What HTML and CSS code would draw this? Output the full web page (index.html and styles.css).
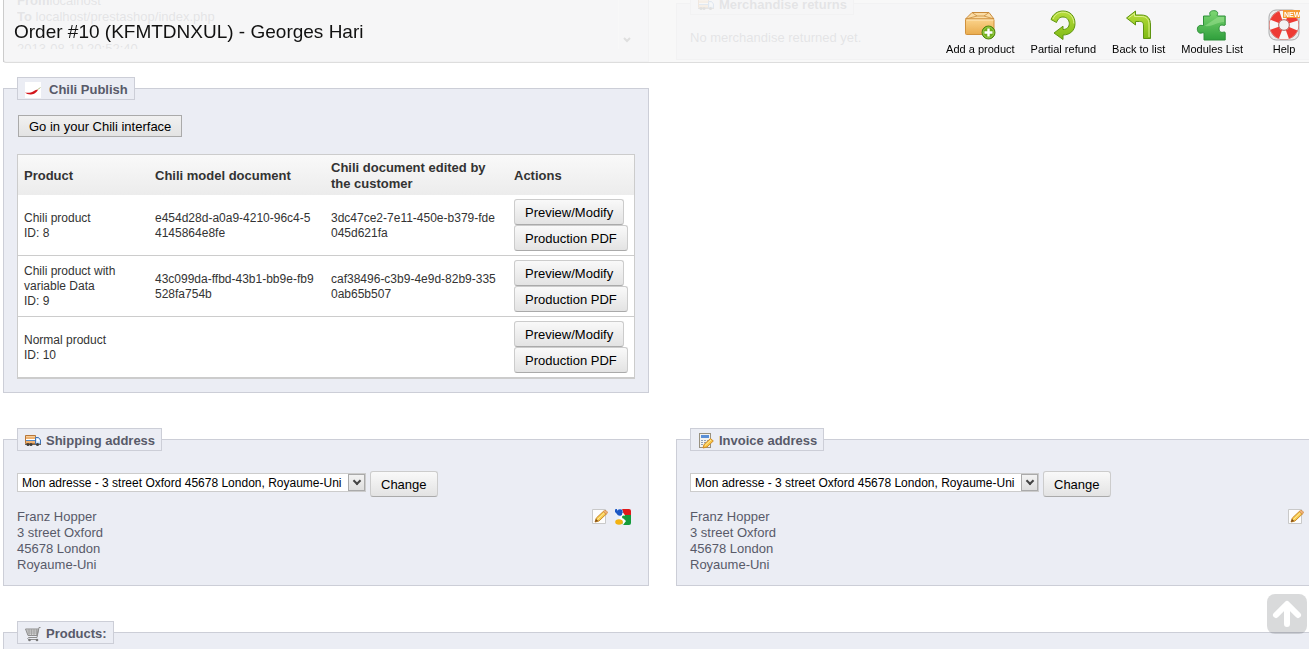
FILE: index.html
```html
<!DOCTYPE html>
<html lang="en">
<head>
    <meta charset="utf-8">
    <title>Order #10 (KFMTDNXUL) - Georges Hari</title>
    <link rel="stylesheet" href="styles.css">
</head>
<body>
    <!-- shared icons -->
    <svg class="defs" width="0" height="0" aria-hidden="true">
        <defs>
            <linearGradient id="green" x1="0" y1="0" x2="0" y2="1">
                <stop offset="0" stop-color="#b9de3c"/>
                <stop offset="1" stop-color="#7fba14"/>
            </linearGradient>
            <linearGradient id="puzzle" x1="0" y1="0" x2="0" y2="1">
                <stop offset="0" stop-color="#7fd873"/>
                <stop offset="1" stop-color="#2f9f3c"/>
            </linearGradient>
            <linearGradient id="box" x1="0" y1="0" x2="0" y2="1">
                <stop offset="0" stop-color="#fbd48c"/>
                <stop offset="1" stop-color="#e9ab4d"/>
            </linearGradient>
        </defs>
        <symbol id="truck" viewBox="0 0 16 16">
            <path d="M0.5 2.500h10v8h-10z" fill="#eeb272" stroke="#b5763a"/>
            <path d="M1 3.500h9" stroke="#f8cf9b"/>
            <path d="M1 6.500h9" stroke="#fff"/>
            <path d="M1 7.500h9" stroke="#4f87c7"/>
            <path d="M10.500 4.500h3l2 2.500v4h-5z" fill="#cfe3fa" stroke="#3f74b8"/>
            <path d="M12 6h1.500l1 1.500v1H12z" fill="#fff"/>
            <path d="M0 11h16v1H0z" fill="#6b6660"/>
            <circle cx="3" cy="11.500" r="1.500" fill="#3d3d3d"/>
            <circle cx="6" cy="11.500" r="1.500" fill="#3d3d3d"/>
            <circle cx="12.500" cy="11.500" r="1.500" fill="#3d3d3d"/>
        </symbol>
        <symbol id="pencil" viewBox="0 0 16 16">
            <path d="M0.500 .5h13v14h-13z" fill="#fdfdfd" stroke="#c9c9c9"/>
            <path d="M3 13l1.300-4L11.500 2.300l2.800 2.700L7 12z" fill="#f8cc4f" stroke="#c98a2a"/>
            <path d="M5.500 10.500l7-6.700" stroke="#fdeaa0"/>
            <path d="M11.300 2.600l1.200-1.100h1.500l1.400 1.500-.1 1.200-1.200 1z" fill="#f0b07a" stroke="#cf8a3c" stroke-width=".7"/>
            <path d="M3 13l1-3 2.200 2z" fill="#7a4a1c"/>
        </symbol>
    </svg>

    <header class="toolbar">
        <h1>Order #10 (KFMTDNXUL) - Georges Hari</h1>
        <nav class="actions">
            <a href="#">
                <svg viewBox="0 0 32 32">
                    <path d="M8 3.500h17l5 6.500H1.500z" fill="#fbdca4" stroke="#c88a3a"/>
                    <path d="M8 3.500l5 3.500h7l5-3.500M2 10l11-3M30 10L20 7" fill="none" stroke="#c88a3a" stroke-width=".8"/>
                    <rect x="1.500" y="10" width="28.500" height="15.500" rx="1" fill="url(#box)" stroke="#d0913c"/>
                    <path d="M2.500 11h27" stroke="#fde7bd"/>
                    <circle cx="24.500" cy="23.500" r="6.500" fill="#6fae1c" stroke="#4c8410"/>
                    <circle cx="24.500" cy="23.500" r="5.300" fill="none" stroke="#a5d351" stroke-width=".8"/>
                    <path d="M24.500 19.500v8M20.500 23.500h8" stroke="#fff" stroke-width="2.400"/>
                </svg>
                Add a product
            </a>
            <a href="#">
                <svg viewBox="0 0 32 32">
                    <path d="M4 10.500C6 5 10.500 2 16 2c7.300 0 12 5.200 12 12.500C28 21.500 23 26 16 26v4.500L7 24l9-6.800v3.300c3.700 0 6.300-2.300 6.300-6S19.500 8 16 8c-3 0-5 1.500-6.500 5.500z" fill="url(#green)" stroke="#5e9410" stroke-linejoin="round"/>
                    <path d="M6 10C8 5.500 11.500 3.200 16 3.200c6.500 0 10.800 4.800 10.800 11.300" fill="none" stroke="#dcf08c"/>
                </svg>
                Partial refund
            </a>
            <a href="#">
                <svg viewBox="0 0 32 32">
                    <path d="M3.500 9l9-7v4h5.500c6.500 0 9.500 3 9.500 10v13.500h-7V17c0-3.500-1-4.500-4-4.500h-4V16z" fill="url(#green)" stroke="#5e9410" stroke-linejoin="round"/>
                    <path d="M5.500 9l6-4.500v3H18c5.500 0 8 2.500 8 8.500v12" fill="none" stroke="#dcf08c"/>
                </svg>
                Back to list
            </a>
            <a href="#">
                <svg viewBox="0 0 32 32">
                    <path d="M7.500 6.500h6.300c1-.6-.8-2 .2-3.700C15 .6 20.500.6 21.500 2.800c.8 1.700-1 3 0 3.700h7.700v9c-1 1.300-2.600-.6-4.400.2-2.300 1-2.300 6 0 7 1.800.8 3.400-1 4.400.3v7.500H8v-7c-1-1-2.500.7-4.400 0-3-1-3-6.500 0-7.500 1.900-.7 3.400.6 3.900 0z" transform="translate(0 .5)" fill="url(#puzzle)" stroke="#2d8f38"/>
                    <path d="M8.500 8h6M22 8h6v5C21 13 17 18 8.500 17z" fill="#a9e69c" opacity=".45"/>
                </svg>
                Modules List
            </a>
            <a href="#">
                <svg viewBox="0 0 32 32">
                    <rect x="1" y="1" width="30" height="30" rx="7" fill="#ececec" stroke="#a9aaab"/>
                    <path d="M4 10Q5 5 10 4M22 28q5-1 6-6M4 22q1 5 6 6" fill="none" stroke="#bcbcbc" stroke-width="2"/>
                    <circle cx="16" cy="16" r="10" fill="none" stroke="#c94a42" stroke-width="10"/>
                    <circle cx="16" cy="16" r="10" fill="none" stroke="#f7f7f7" stroke-width="9"/>
                    <circle cx="16" cy="16" r="10" fill="none" stroke="#ee3b34" stroke-width="9" stroke-dasharray="8.700 7.008" stroke-dashoffset="4.350" transform="rotate(45 16 16)"/>
                    <circle cx="16" cy="16" r="5.300" fill="#f3f3f3" stroke="#b96b66"/>
                    <rect x="15" y="1" width="17" height="8" fill="#f59a33"/>
                    <text x="16" y="8" class="new-tag">NEW</text>
                </svg>
                Help
            </a>
        </nav>
    </header>

    <main class="page">
        <div class="columns top-row">
            <div class="panel messages">
                <div class="message-list">
                    <div class="message-text">
                        <b>From</b>localhost<br>
                        <b>To</b> localhost/prestashop/index.php<br>
                        <br>
                        2013-08-19 20:52:40
                    </div>
                    <div class="scroll-track">
                        <svg viewBox="0 0 8 6"><path d="M1 1l3 3 3-3" fill="none" stroke="#333" stroke-width="2"/></svg>
                    </div>
                </div>
            </div>
            <fieldset class="panel">
                <legend><svg><use href="#truck"/></svg>Merchandise returns</legend>
                No merchandise returned yet.
            </fieldset>
        </div>

        <div class="columns">
            <fieldset class="panel">
                <legend class="wide">
                    <svg viewBox="0 0 16 16">
                        <rect width="16" height="16" fill="#fff"/>
                        <path d="M0 10.500c3 .7 6 .2 8.500-1.300 1.500-.9 3-1.500 4.500-1.700-.7 2.500-3.500 4.700-7 4.900-2.500.1-4.700-.6-6-1.900z" fill="#d3151c"/>
                        <path d="M12.500 7.700L15.500 5.500" stroke="#b5bf8a"/>
                    </svg>Chili Publish
                </legend>
                <button type="button" class="btn-flat">Go in your Chili interface</button>
                <table class="documents">
                    <thead>
                        <tr>
                            <th class="col-product">Product</th>
                            <th class="col-model">Chili model document</th>
                            <th class="col-edited">Chili document edited by the customer</th>
                            <th>Actions</th>
                        </tr>
                    </thead>
                    <tbody>
                        <tr>
                            <td>Chili product<br>ID: 8</td>
                            <td class="uid">e454d28d-a0a9-4210-96c4-54145864e8fe</td>
                            <td class="uid">3dc47ce2-7e11-450e-b379-fde045d621fa</td>
                            <td class="buttons">
                                <div class="stack">
                                    <button type="button" class="btn">Preview/Modify</button>
                                    <button type="button" class="btn">Production PDF</button>
                                </div>
                            </td>
                        </tr>
                        <tr>
                            <td>Chili product with variable Data<br>ID: 9</td>
                            <td class="uid">43c099da-ffbd-43b1-bb9e-fb9528fa754b</td>
                            <td class="uid">caf38496-c3b9-4e9d-82b9-3350ab65b507</td>
                            <td class="buttons">
                                <div class="stack">
                                    <button type="button" class="btn">Preview/Modify</button>
                                    <button type="button" class="btn">Production PDF</button>
                                </div>
                            </td>
                        </tr>
                        <tr>
                            <td>Normal product<br>ID: 10</td>
                            <td></td>
                            <td></td>
                            <td class="buttons">
                                <div class="stack">
                                    <button type="button" class="btn">Preview/Modify</button>
                                    <button type="button" class="btn">Production PDF</button>
                                </div>
                            </td>
                        </tr>
                    </tbody>
                </table>
            </fieldset>
        </div>

        <div class="columns">
            <fieldset class="panel address">
                <legend><svg><use href="#truck"/></svg>Shipping address</legend>
                <div class="address-form">
                    <span class="select">
                        <select aria-label="Shipping address">
                            <option>Mon adresse - 3 street Oxford 45678 London, Royaume-Uni</option>
                        </select>
                    </span>
                    <button type="button" class="btn">Change</button>
                </div>
                <div class="address-body">
                    <div>Franz Hopper<br>3 street Oxford<br>45678 London<br>Royaume-Uni</div>
                    <div class="icons">
                        <a href="#" aria-label="Edit"><svg><use href="#pencil"/></svg></a>
                        <a href="#" aria-label="Map">
                            <svg viewBox="0 0 16 16">
                                <path d="M0 0h8v16H0z" fill="#e8f0fb"/>
                                <path d="M7 0h7q2 0 2 2v4H9z" fill="#e01b1b"/>
                                <path d="M9 6h7v8q0 2-2 2H7z" fill="#159b3b"/>
                                <path d="M0 3V1q0-1 1-1h1v5z" fill="#1c58c4"/>
                                <circle cx="5" cy="3.500" r="3.200" fill="#1c58c4"/>
                                <path d="M8 0L7 3l3 3-2 3 3 3-3 4H7l1-3-4-4 3-3z" fill="#fff"/>
                                <ellipse cx="4" cy="13" rx="3.800" ry="2.700" fill="#f3b211"/>
                                <circle cx="8.500" cy="8" r="1.500" fill="#159b3b"/>
                            </svg>
                        </a>
                    </div>
                </div>
            </fieldset>
            <fieldset class="panel address">
                <legend>
                    <svg viewBox="0 0 16 16">
                        <rect x="1.500" y=".5" width="11" height="14" fill="#f2f2f0" stroke="#98917f"/>
                        <rect x="3" y="2" width="8" height="3" fill="#5b8fd6"/>
                        <path d="M3 7.500h8M3 9.500h8M3 11.500h5" stroke="#8f9fb5" stroke-dasharray="2 1"/>
                        <path d="M5 15l1-3.500 6.500-6 2.800 2.500L9 14z" fill="#f8c646" stroke="#d08a28"/>
                        <path d="M7 12.500l6-5.500" stroke="#fdeaa0"/>
                    </svg>Invoice address
                </legend>
                <div class="address-form">
                    <span class="select">
                        <select aria-label="Invoice address">
                            <option>Mon adresse - 3 street Oxford 45678 London, Royaume-Uni</option>
                        </select>
                    </span>
                    <button type="button" class="btn">Change</button>
                </div>
                <div class="address-body">
                    <div>Franz Hopper<br>3 street Oxford<br>45678 London<br>Royaume-Uni</div>
                    <div class="icons">
                        <a href="#" aria-label="Edit"><svg><use href="#pencil"/></svg></a>
                    </div>
                </div>
            </fieldset>
        </div>

        <fieldset class="panel products">
            <legend>
                <svg viewBox="0 0 16 16">
                    <path d="M0.500 3h13l-1.500 6.500H3z" fill="#d6d6d6" stroke="#8d8d8d"/>
                    <path d="M1 5h12M2 7h10.500M4 3v6M6.500 3v6.500M9 3v6.500M11.500 3v6" stroke="#9d9d9d" stroke-width=".8"/>
                    <path d="M15.500 1.500H14L12 11.500H3.500q-1.500 1 0 2H13" fill="none" stroke="#8d8d8d"/>
                    <circle cx="4.500" cy="14" r="1.300" fill="#777"/>
                    <circle cx="12" cy="14" r="1.300" fill="#777"/>
                </svg>Products:
            </legend>
        </fieldset>
    </main>

    <a href="#" class="go-top" aria-label="Back to top">
        <svg viewBox="0 0 40 40"><path d="M20 30V11M9 21l11-11 11 11" fill="none" stroke="#fff" stroke-width="6" stroke-linecap="round" stroke-linejoin="round"/></svg>
    </a>
</body>
</html>
```
FILE: styles.css
```css
* {
    box-sizing: border-box;
}
body {
    margin: 0;
    height: 100vh;
    overflow: hidden;
    font-family: "Liberation Sans", Arial, sans-serif;
    font-size: 13px;
    line-height: 16px;
    color: #585a69;
    background: #fff;
}
.defs {
    position: absolute;
}
a {
    color: inherit;
    text-decoration: none;
}

.toolbar {
    position: fixed;
    z-index: 10;
    top: 0;
    left: 3px;
    right: 0;
    height: 63px;
    display: flex;
    justify-content: space-between;
    padding-left: 10px;
    background: rgba(247, 247, 247, 0.88);
    border-left: 1px solid #ccc;
    border-bottom: 1px solid #ddd;
    border-bottom-left-radius: 3px;
}
.toolbar h1 {
    margin: 0;
    font-size: 19px;
    font-weight: normal;
    line-height: 64px;
    color: #111;
}
.actions {
    display: flex;
    gap: 16px;
    padding-top: 9px;
}
.actions a {
    display: flex;
    flex-direction: column;
    align-items: center;
    min-width: 50px;
    font-size: 11px;
    color: #000;
}
.actions svg {
    width: 32px;
    height: 32px;
}
.new-tag {
    font-size: 7px;
    font-weight: bold;
    fill: #fff;
}

/* the right column runs off the window edge */
.page {
    margin: -8px -13px 0 3px;
}
.columns {
    display: grid;
    grid-template-columns: 1fr 1fr;
    column-gap: 27px;
    margin-bottom: 35px;
}
.top-row {
    height: 70px;
    align-items: start;
    margin-bottom: 15px;
}
.panel {
    min-width: 0;
    margin: 0;
    padding: 15px 13px 13px;
    background: #ebedf4;
    border: 1px solid #ccced7;
}
.panel legend {
    display: flex;
    align-items: center;
    gap: 5px;
    height: 23px;
    padding: 2px 6px 0 7px;
    background: #ebedf4;
    border: 1px solid #ccced7;
    font-weight: bold;
}
.panel legend.wide {
    gap: 8px;
}
.panel legend svg,
.icons svg {
    display: block;
    width: 16px;
    height: 16px;
}
.messages {
    height: 70px;
    padding-top: 0;
}
.message-list {
    display: flex;
    height: 56px;
    overflow: hidden;
}
.message-text {
    flex: 1;
}
.scroll-track {
    display: flex;
    align-items: flex-end;
    justify-content: center;
    width: 17px;
    padding-bottom: 6px;
    border-left: 1px solid #fff;
}
.scroll-track svg {
    width: 8px;
    height: 6px;
}

.btn,
.btn-flat {
    display: block;
    font-family: inherit;
    font-size: 13px;
    white-space: nowrap;
    color: #000;
    padding: 0 10px;
    cursor: pointer;
    background: linear-gradient(#f9f9f9, #e3e3e3);
    border: 1px solid #ccc;
    border-bottom-color: #aaa;
    border-radius: 3px;
    height: 26px;
}
.btn-flat {
    height: 22px;
    margin-left: 1px;
    background: linear-gradient(#f1f1f1, #e3e3e3);
    border: 1px solid #aaa;
    border-radius: 0;
}

.documents {
    width: 100%;
    margin-top: 17px;
    table-layout: fixed;
    border-collapse: separate;
    border-spacing: 0;
    border: 1px solid #ccc;
    border-bottom-width: 2px;
    background: #fff;
    color: #333;
    font-size: 12px;
    line-height: 15px;
}
.documents th {
    height: 40px;
    padding: 1px 6px 0;
    text-align: left;
    font-size: 13px;
    line-height: 16px;
    background: linear-gradient(#f9f9f9, #ececec);
}
.documents td {
    height: 60px;
    padding: 5px 6px 4px;
}
.documents tr + tr td {
    height: 61px;
    border-top: 1px solid #ccc;
}
.documents .buttons {
    padding: 4px 0 4px 6px;
}
.documents .uid {
    padding-right: 10px;
    word-break: break-all;
}
.col-product {
    width: 131px;
}
.col-model {
    width: 176px;
}
.col-edited {
    width: 183px;
}
.stack {
    display: flex;
    flex-direction: column;
    align-items: flex-start;
}

.address {
    padding-top: 20px;
    padding-bottom: 12px;
}
.address-form {
    display: flex;
    align-items: flex-start;
    gap: 4px;
}
.select {
    position: relative;
    display: block;
    margin-top: 2px;
}
.select select {
    appearance: none;
    display: block;
    width: 349px;
    height: 19px;
    padding: 0 17px 0 4px;
    border: 1px solid #ccc;
    border-radius: 0;
    background: #fff;
    font-family: inherit;
    font-size: 12px;
    color: #000;
}
.select::before {
    content: "";
    position: absolute;
    top: 1px;
    right: 1px;
    width: 17px;
    height: 17px;
    background: linear-gradient(#f3f3f3, #dedede);
    border: 1px solid #aaa;
    box-sizing: border-box;
    pointer-events: none;
}
.select::after {
    content: "";
    position: absolute;
    top: 5px;
    right: 6px;
    width: 6px;
    height: 6px;
    box-sizing: border-box;
    border: solid #444;
    border-width: 0 2px 2px 0;
    transform: rotate(45deg);
    pointer-events: none;
}
.address-body {
    display: flex;
    justify-content: space-between;
    margin-top: 12px;
}
.icons {
    display: flex;
    gap: 7px;
    padding-right: 4px;
}
.products {
    height: 28px;
}

.go-top {
    position: fixed;
    right: 2px;
    bottom: 15px;
    width: 40px;
    height: 40px;
    border-radius: 8px;
    background: rgba(80, 85, 90, 0.22);
}
```
